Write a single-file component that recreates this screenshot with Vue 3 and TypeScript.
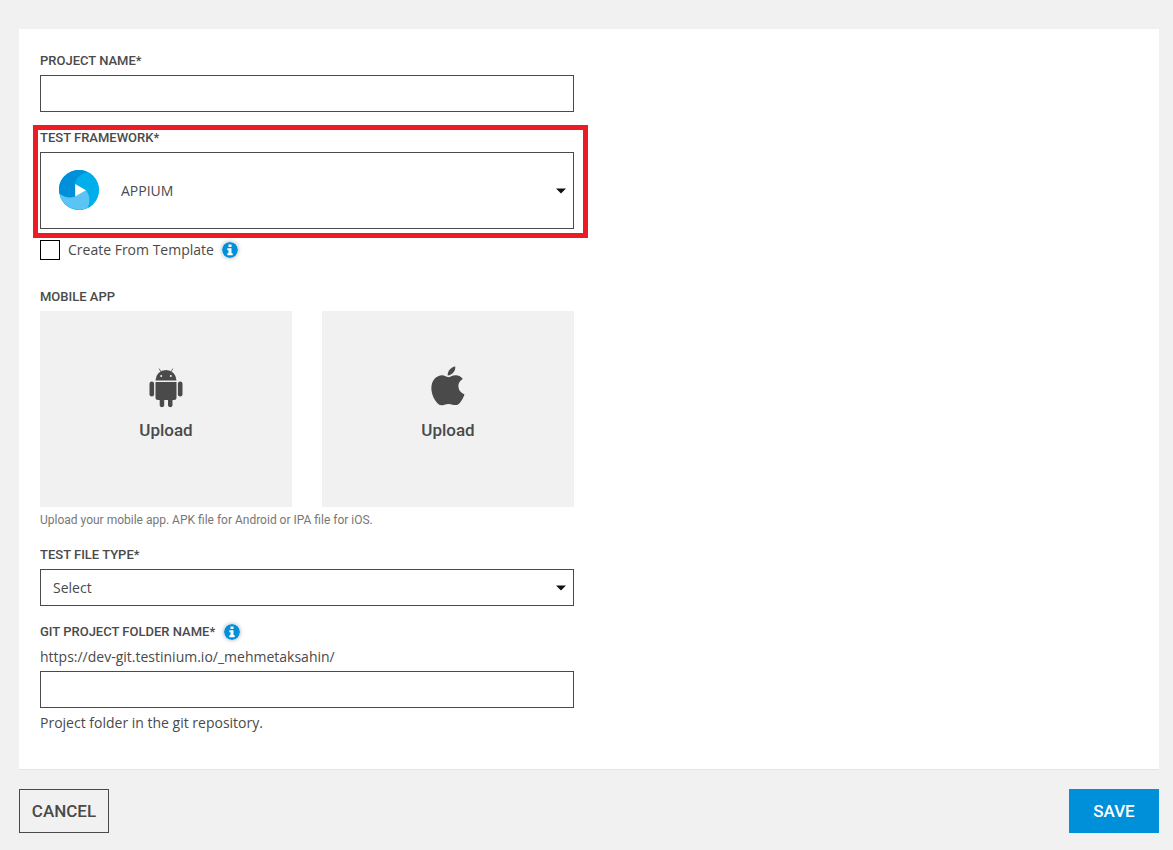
<script setup lang="ts">
import { ref } from 'vue'

interface UploadTarget {
  id: string
  platform: 'android' | 'ios'
  accept: string
}

const projectName = ref('')
const framework = ref('APPIUM')
const fromTemplate = ref(false)
const fileType = ref('')
const folderName = ref('')

const uploads: UploadTarget[] = [
  { id: 'upload-android', platform: 'android', accept: '.apk' },
  { id: 'upload-ios', platform: 'ios', accept: '.ipa' },
]
</script>

<template>
  <form class="page" @submit.prevent>
    <main class="card">
      <div class="column">
        <div class="field">
          <label class="label" for="project-name">PROJECT NAME*</label>
          <input id="project-name" v-model="projectName" class="control" type="text" />
        </div>

        <div class="field framework">
          <label class="label" for="framework">TEST FRAMEWORK*</label>
          <div class="select-box">
            <svg class="logo" viewBox="0 0 40 40" aria-hidden="true">
              <circle cx="20" cy="20" r="20" fill="#00aeec" />
              <path d="M0.2 23A20 20 0 0 1 29 2.2C22 3.4 17 8 16.2 14.5L16.2 27C10 28.8 4.200 27.400 0.200 23Z" fill="#008fd9" />
              <path d="M0.500 23.500C5 27.600 10.500 28.600 16.200 26.600L27 20C31.500 26 31.600 32.600 28.500 38A20 20 0 0 1 0.500 23.500Z" fill="#5bc4f4" />
              <path d="M29 2.200C21 3.200 16.400 8.500 16.200 14.500L27 20C31.700 26 31.500 32.500 28.500 38A20 20 0 0 0 29 2.200Z" fill="#00aeec" />
              <path d="M16.200 14L27 20.200L16.200 26.600Z" fill="#fff" />
            </svg>
            <select id="framework" v-model="framework" class="control tall">
              <option>APPIUM</option>
            </select>
            <svg class="caret" viewBox="0 0 10 6" aria-hidden="true"><path d="M0 0.500H10L5 5.500Z" fill="#111" /></svg>
          </div>
          <span class="highlight" aria-hidden="true"></span>
        </div>

        <div class="template-row">
          <input id="template" v-model="fromTemplate" class="checkbox" type="checkbox" />
          <label for="template">Create From Template</label>
          <svg class="info" viewBox="0 0 16 16" role="img" aria-label="Information">
            <circle cx="8" cy="8" r="8" fill="#008fd9" />
            <path d="M6.500 2.500H9.500V5H6.500ZM5.300 6.200H9.500V11.200H10.700V13.200H5.300V11.200H6.500V8.200H5.300Z" fill="#fff" />
          </svg>
        </div>

        <section class="mobile">
          <h2 class="label">MOBILE APP</h2>
          <div class="tiles">
            <label v-for="item in uploads" :key="item.id" class="tile" :for="item.id">
              <svg v-if="item.platform === 'android'" class="platform" viewBox="0 0 40 44" aria-hidden="true">
                <g fill="#4a4a4a">
                  <path d="M9.500 15.500A10.500 10.500 0 0 1 30.500 15.500Z" />
                  <path d="M9.500 17H30.500V32.500A2.500 2.500 0 0 1 28 35H26.500V40.500A2.300 2.300 0 0 1 22 40.500V35H18.200V40.500A2.300 2.300 0 0 1 13.700 40.500V35H12A2.500 2.500 0 0 1 9.500 32.500Z" />
                  <rect x="3.500" y="16.500" width="4.600" height="15" rx="2.300" />
                  <rect x="31.900" y="16.500" width="4.600" height="15" rx="2.300" />
                </g>
                <path d="M13.400 4L15.600 8M26.600 4L24.400 8" stroke="#4a4a4a" stroke-width="0.800" stroke-linecap="round" />
                <circle cx="15.200" cy="11" r="1" fill="#f1f1f1" />
                <circle cx="24.800" cy="11" r="1" fill="#f1f1f1" />
              </svg>
              <svg v-else class="platform" viewBox="0 0 40 44" aria-hidden="true">
                <path d="M27.300 1.500C27.700 6 24.200 10.300 19.700 10.400C19.400 6 23 2 27.300 1.500Z" fill="#4a4a4a" />
                <path d="M20.300 12.200C22 12.200 24.300 10.100 27.800 10.200C30.800 10.300 33.300 11.700 34.800 13.900C31.800 15.700 30.200 18.200 30.400 21.500C30.600 25.300 32.800 28 36.500 29.400C35.500 32.400 33.800 35.400 31.800 37.900C28.200 42 25.600 39.200 20.600 38.900C15.400 39 13 42.300 9.200 38.100C4.300 32.400 2.200 24.600 4 18.600C5.500 13.600 9.500 10.500 13.800 10.300C16.600 10.200 18.500 12.200 20.300 12.200Z" fill="#4a4a4a" />
              </svg>
              <span>Upload</span>
              <input :id="item.id" class="file" type="file" :accept="item.accept" />
            </label>
          </div>
          <p class="note">Upload your mobile app. APK file for Android or IPA file for iOS.</p>
        </section>

        <div class="field">
          <label class="label" for="file-type">TEST FILE TYPE*</label>
          <div class="select-box">
            <select id="file-type" v-model="fileType" class="control">
              <option value="">Select</option>
            </select>
            <svg class="caret" viewBox="0 0 10 6" aria-hidden="true"><path d="M0 0.500H10L5 5.500Z" fill="#111" /></svg>
          </div>
        </div>

        <div class="field">
          <div class="label-row">
            <label class="label" for="folder-name">GIT PROJECT FOLDER NAME*</label>
            <svg class="info" viewBox="0 0 16 16" role="img" aria-label="Information">
              <circle cx="8" cy="8" r="8" fill="#008fd9" />
              <path d="M6.500 2.500H9.500V5H6.500ZM5.300 6.200H9.500V11.200H10.700V13.200H5.300V11.200H6.500V8.200H5.300Z" fill="#fff" />
            </svg>
          </div>
          <p class="text">https://dev-git.testinium.io/_mehmetaksahin/</p>
          <input id="folder-name" v-model="folderName" class="control" type="text" />
          <p class="text">Project folder in the git repository.</p>
        </div>
      </div>
    </main>

    <footer class="actions">
      <button class="button" type="button">CANCEL</button>
      <button class="button primary" type="submit">SAVE</button>
    </footer>
  </form>
</template>

<style>
body {
  margin: 0;
  background: #f1f1f1;
}
</style>

<style scoped>
.page {
  padding: 29px 14px 17px 19px;
  color: #4a4a4a;
  font: 14px/20px "Open Sans", "Noto Sans", sans-serif;
}
.page *,
.page {
  box-sizing: border-box;
}
.card {
  display: grid;
  grid-template-columns: 1fr 1fr;
  gap: 30px;
  padding: 22px 21px 36px;
  background: #fff;
  border-bottom: 1px solid #e4e4e4;
}
.column {
  display: flex;
  flex-direction: column;
  gap: 16px;
  min-width: 0;
}
.field {
  display: flex;
  flex-direction: column;
  gap: 4px;
}
.label {
  margin: 0;
  font: 500 13px/20px Roboto, sans-serif;
}
.label-row {
  display: flex;
  align-items: center;
  gap: 9px;
}
.control {
  display: block;
  width: 100%;
  height: 37px;
  margin: 0;
  padding: 0 12px;
  border: 1px solid #4a4a4a;
  border-radius: 0;
  background: #fff;
  color: inherit;
  font: inherit;
  appearance: none;
}
select.control {
  padding: 0 36px 0 12px;
}
select.control.tall {
  height: 77px;
  padding-left: 80px;
}
.select-box,
.framework {
  position: relative;
}
.logo {
  position: absolute;
  top: 18px;
  left: 19px;
  width: 40px;
  height: 40px;
  pointer-events: none;
}
.caret {
  position: absolute;
  top: calc(50% - 3px);
  right: 8px;
  width: 10px;
  height: 6px;
  pointer-events: none;
}
.highlight {
  position: absolute;
  inset: -3px -14px -9px -7px;
  border: 5px solid #ed1c24;
  pointer-events: none;
}
.template-row {
  display: flex;
  align-items: center;
  gap: 8px;
  margin-top: -5px;
}
.checkbox {
  width: 20px;
  height: 20px;
  margin: 0;
  border: 1px solid #000;
  background: #fff;
  appearance: none;
}
.checkbox:checked {
  background: #008fd9;
}
.info {
  width: 16px;
  height: 16px;
  border-radius: 50%;
  box-shadow: 0 0 4px #aaa;
}
.mobile {
  margin-top: 11px;
}
.tiles {
  display: grid;
  grid-template-columns: 1fr 1fr;
  gap: 30px;
  margin: 4px 0;
}
.tile {
  position: relative;
  display: flex;
  flex-direction: column;
  align-items: center;
  justify-content: center;
  gap: 11px;
  height: 196px;
  padding-bottom: 13px;
  background: #f1f1f1;
  font: 500 17px/20px Roboto, sans-serif;
  cursor: pointer;
}
.platform {
  width: 40px;
  height: 44px;
}
.file {
  position: absolute;
  inset: 0;
  width: 100%;
  height: 100%;
  opacity: 0;
}
.note {
  margin: 0;
  color: #777;
  font: 12px/18px Roboto, sans-serif;
}
.text {
  margin: 0;
  line-height: 21px;
}
.actions {
  display: flex;
  justify-content: space-between;
  padding-top: 19px;
}
.button {
  width: 90px;
  height: 44px;
  padding: 0;
  border: 1px solid #4a4a4a;
  background: transparent;
  color: inherit;
  font: 500 17px/20px Roboto, sans-serif;
  cursor: pointer;
}
.button.primary {
  border-color: #008fd9;
  background: #008fd9;
  color: #fff;
}
</style>
